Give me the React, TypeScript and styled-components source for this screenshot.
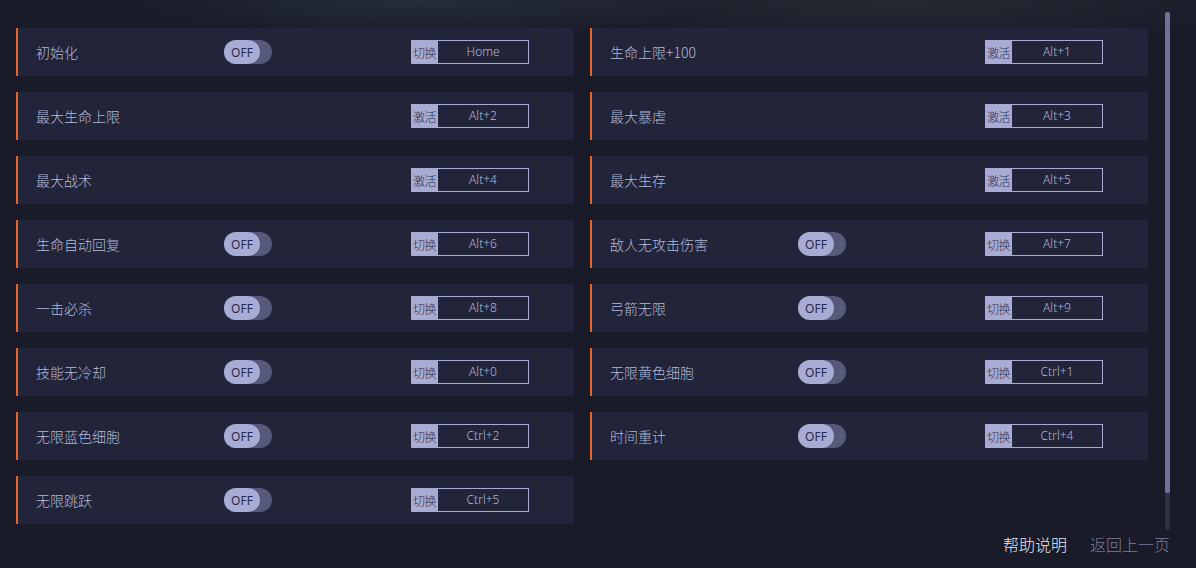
import styled, { createGlobalStyle } from 'styled-components';

const GlobalStyle = createGlobalStyle`
  html, body {
    margin: 0;
    padding: 0;
    background: #191b28;
    font-family: 'Noto Sans CJK SC', 'Noto Sans', sans-serif;
  }
`;

const Page = styled.div`
  width: 1196px;
  height: 568px;
  position: relative;
  overflow: hidden;
  background:
    radial-gradient(ellipse 300px 40px at 420px 0px, rgba(60, 80, 90, 0.35), transparent),
    radial-gradient(ellipse 400px 50px at 900px 0px, rgba(70, 70, 80, 0.3), transparent),
    #191b28;
  display: flex;
`;

const Content = styled.div`
  flex: 1;
  display: flex;
  flex-direction: column;
  padding: 28px 0 0 16px;
`;

const Grid = styled.div`
  display: grid;
  grid-template-columns: 558px 558px;
  grid-auto-rows: 48px;
  column-gap: 16px;
  row-gap: 16px;
`;

const Card = styled.div`
  display: grid;
  grid-template-columns: 188px 187px 118px;
  align-items: center;
  padding-left: 18px;
  background: #22243a;
  border-left: 2px solid #e8642a;
`;

const Label = styled.span`
  font-size: 14px;
  font-weight: 300;
  color: #b6b9d6;
`;

const Toggle = styled.div`
  width: 48px;
  height: 24px;
  border-radius: 12px;
  background: #565978;
  display: flex;
`;

const Knob = styled.div`
  width: 36px;
  height: 24px;
  border-radius: 12px;
  background: #a8abd3;
  color: #2a2c48;
  font-size: 12px;
  display: flex;
  align-items: center;
  justify-content: center;
  font-family: 'Noto Sans', sans-serif;
`;

const Hotkey = styled.div`
  grid-column: 3;
  height: 24px;
  display: flex;
  box-sizing: border-box;
  border: 1px solid #a8abd3;
`;

const HotkeyTag = styled.span`
  width: 27px;
  background: #a8abd3;
  color: #2e3050;
  font-size: 12px;
  font-weight: 300;
  display: flex;
  align-items: center;
  justify-content: center;
  letter-spacing: -0.5px;
  margin: -1px 0 -1px -1px;
`;

const HotkeyKey = styled.span`
  flex: 1;
  color: #b6b9d6;
  font-size: 12px;
  font-family: 'Noto Sans', sans-serif;
  font-weight: 300;
  display: flex;
  align-items: center;
  justify-content: center;
  padding-bottom: 2px;
`;

const Footer = styled.div`
  margin-top: auto;
  display: flex;
  justify-content: flex-end;
  gap: 23px;
  padding: 0 26px 12px 0;
`;

const FooterLink = styled.span<{ dim?: boolean }>`
  font-size: 16px;
  font-weight: 300;
  color: ${({ dim }) => (dim ? '#7b7e94' : '#e6e7f0')};
`;

const Scrollbar = styled.div`
  position: absolute;
  left: 1165px;
  top: 12px;
  width: 5px;
  height: 518px;
  background: #2e3043;
  border-radius: 2px;
`;

const Thumb = styled.div`
  height: 481px;
  background: #6f7298;
  border-radius: 2px;
`;

type Item = {
  name: string;
  toggle: boolean;
  mode: '切换' | '激活';
  key: string;
};

const items: Item[] = [
  { name: '初始化', toggle: true, mode: '切换', key: 'Home' },
  { name: '生命上限+100', toggle: false, mode: '激活', key: 'Alt+1' },
  { name: '最大生命上限', toggle: false, mode: '激活', key: 'Alt+2' },
  { name: '最大暴虐', toggle: false, mode: '激活', key: 'Alt+3' },
  { name: '最大战术', toggle: false, mode: '激活', key: 'Alt+4' },
  { name: '最大生存', toggle: false, mode: '激活', key: 'Alt+5' },
  { name: '生命自动回复', toggle: true, mode: '切换', key: 'Alt+6' },
  { name: '敌人无攻击伤害', toggle: true, mode: '切换', key: 'Alt+7' },
  { name: '一击必杀', toggle: true, mode: '切换', key: 'Alt+8' },
  { name: '弓箭无限', toggle: true, mode: '切换', key: 'Alt+9' },
  { name: '技能无冷却', toggle: true, mode: '切换', key: 'Alt+0' },
  { name: '无限黄色细胞', toggle: true, mode: '切换', key: 'Ctrl+1' },
  { name: '无限蓝色细胞', toggle: true, mode: '切换', key: 'Ctrl+2' },
  { name: '时间重计', toggle: true, mode: '切换', key: 'Ctrl+4' },
  { name: '无限跳跃', toggle: true, mode: '切换', key: 'Ctrl+5' },
];

export default function App() {
  return (
    <Page>
      <GlobalStyle />
      <Content>
        <Grid>
          {items.map((item) => (
            <Card key={item.name}>
              <Label>{item.name}</Label>
              {item.toggle && (
                <Toggle>
                  <Knob>OFF</Knob>
                </Toggle>
              )}
              <Hotkey>
                <HotkeyTag>{item.mode}</HotkeyTag>
                <HotkeyKey>{item.key}</HotkeyKey>
              </Hotkey>
            </Card>
          ))}
        </Grid>
        <Footer>
          <FooterLink>帮助说明</FooterLink>
          <FooterLink dim>返回上一页</FooterLink>
        </Footer>
      </Content>
      <Scrollbar>
        <Thumb />
      </Scrollbar>
    </Page>
  );
}
